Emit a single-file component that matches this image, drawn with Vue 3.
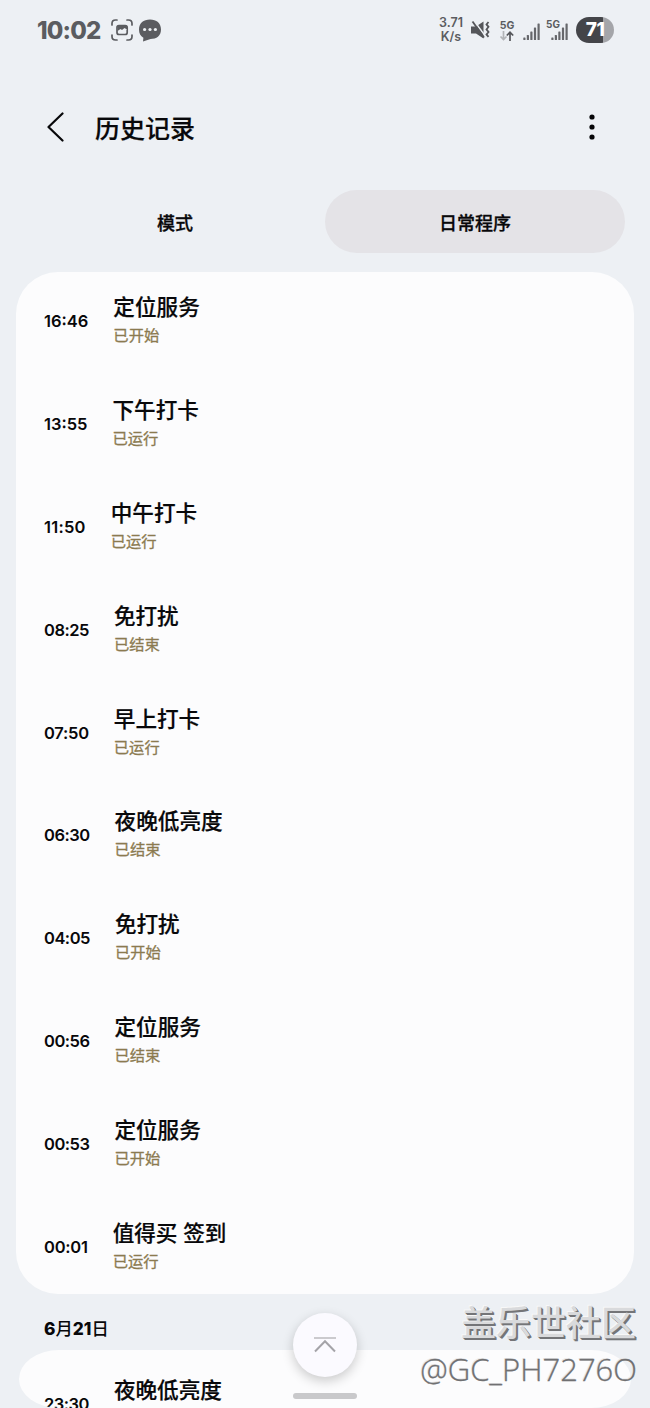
<template>
  <div class="screen">
    <header class="status-bar">
      <div class="status-left">
        <span class="clock">10:02</span>
        <svg class="capture-icon" viewBox="0 0 22 22" width="22" height="22">
          <path d="M1 6V4.500Q1 1 4.500 1H6M16 1h1.500Q21 1 21 4.500V6M21 16v1.500Q21 21 17.500 21H16M6 21H4.500Q1 21 1 17.500V16" fill="none" stroke="#5b5c60" stroke-width="1.700" stroke-linecap="round" />
          <rect x="6" y="6.500" width="10.200" height="9" rx="2" fill="none" stroke="#5b5c60" stroke-width="1.700" />
          <path d="M7 14.500v-2.500l2.500-1.500 1.500 1 2.500-2 2.200 1.500V7H7z" fill="#eef1f4" />
          <path d="M6.500 12l3-2 1.500 1 2.500-2 2.500 1.500V6.500h-9.500z" fill="#5b5c60" />
        </svg>
        <svg class="chat-icon" viewBox="0 0 24 23" width="24" height="23">
          <path d="M12 .5C18.500.5 23 4 23 10.500S18.500 20 12.500 20L5 22.500l.4-3.700C2.500 17 1 14.500 1 10.500 1 4 5.500.5 12 .5z" fill="#5b5c60" />
          <circle cx="6.600" cy="10.500" r="1.600" fill="#eef1f4" />
          <circle cx="12" cy="10.500" r="1.600" fill="#eef1f4" />
          <circle cx="17.400" cy="10.500" r="1.600" fill="#eef1f4" />
        </svg>
      </div>
      <div class="status-right">
        <div class="speed"><span>3.71</span><span>K/s</span></div>
        <svg class="mute-icon" viewBox="0 0 20 20" width="20" height="20">
          <path d="M0 6.500h5L12.500 1.500v17L5 13.500H0z" fill="#55565a" />
          <path d="M2.500 0 13.500 15" stroke="#eef1f4" stroke-width="1.500" />
          <path d="M1.500 1.500 13 17.500" stroke="#55565a" stroke-width="1.800" />
          <path d="M17.500 2l-2 2.400 2 2.400-2 2.600 2 2.600-2 2.400 2 2.400" fill="none" stroke="#55565a" stroke-width="1.800" />
        </svg>
        <div class="network">
          <span>5G</span>
          <svg viewBox="0 0 16 10" width="16" height="10" fill="none" stroke-width="1.700">
            <path d="M4.500 0v8.500M1.500 5.500l3 3 3-3" stroke="#b2b4b7" />
            <path d="M11 10V1.200M7.800 4.500l3.200-3.200 3.200 3.200" stroke="#55565a" />
          </svg>
        </div>
        <svg class="signal" viewBox="0 0 18 18" width="18" height="18" fill="#66676b">
          <rect v-for="bar in bars" :key="bar.x" :x="bar.x" :y="17 - bar.h" width="2.200" :height="bar.h" rx=".6" />
        </svg>
        <div class="signal-two">
          <span>5G</span>
          <svg class="signal" viewBox="0 0 18 18" width="18" height="18" fill="#66676b">
            <rect v-for="bar in bars" :key="bar.x" :x="bar.x" :y="17 - bar.h" width="2.200" :height="bar.h" rx=".6" />
          </svg>
        </div>
        <div class="battery">71</div>
      </div>
    </header>

    <div class="title-bar">
      <svg class="back" viewBox="0 0 18 30" width="18" height="30">
        <path d="M15.500 1.500 1.500 15l14 13.500" fill="none" stroke="#08080a" stroke-width="2.200" stroke-linecap="round" stroke-linejoin="round" />
      </svg>
      <h1>历史记录</h1>
      <svg class="more" viewBox="0 0 6 26" width="6" height="26" fill="#060608">
        <circle cx="3" cy="3" r="2.600" />
        <circle cx="3" cy="13" r="2.600" />
        <circle cx="3" cy="23" r="2.600" />
      </svg>
    </div>

    <nav class="tabs">
      <button
        v-for="tab in tabs"
        :key="tab"
        :class="{ active: activeTab === tab }"
        @click="activeTab = tab"
      >
        {{ tab }}
      </button>
    </nav>

    <section class="card">
      <div v-for="item in history" :key="item.time" class="row">
        <span class="time" :class="item.fit">{{ item.time }}</span>
        <div class="info">
          <span class="name">{{ item.name }}</span>
          <span class="state">{{ item.state }}</span>
        </div>
      </div>
    </section>

    <h2 class="date"><b>6</b>月<b>21</b>日</h2>

    <section class="card next-card">
      <div class="row">
        <span class="time tight">23:30</span>
        <div class="info">
          <span class="name">夜晚低亮度</span>
        </div>
      </div>
    </section>

    <button class="to-top">
      <svg viewBox="0 0 24 18" width="24" height="18" fill="none">
        <path d="M1 2h22" stroke="#c2c1c6" stroke-width="1.700" />
        <path d="M2 15.500 12 5.200l10 10.300" stroke="#a4a3a8" stroke-width="2" />
      </svg>
    </button>
    <div class="home-bar"></div>

    <div class="watermark">
      <span class="community">盖乐世社区</span>
      <span class="user">@GC_PH7276O</span>
    </div>
  </div>
</template>

<script setup>
import { ref } from 'vue';

const tabs = ['模式', '日常程序'];
const activeTab = ref('日常程序');

// fit evens out the times made of wide or narrow digits
const history = [
  { time: '16:46', name: '定位服务', state: '已开始' },
  { time: '13:55', name: '下午打卡', state: '已运行' },
  { time: '11:50', name: '中午打卡', state: '已运行', fit: 'loose' },
  { time: '08:25', name: '免打扰', state: '已结束', fit: 'tight' },
  { time: '07:50', name: '早上打卡', state: '已运行', fit: 'snug' },
  { time: '06:30', name: '夜晚低亮度', state: '已结束', fit: 'tight' },
  { time: '04:05', name: '免打扰', state: '已开始', fit: 'tight' },
  { time: '00:56', name: '定位服务', state: '已结束', fit: 'tight' },
  { time: '00:53', name: '定位服务', state: '已开始', fit: 'tight' },
  { time: '00:01', name: '值得买 签到', state: '已运行', fit: 'snug' }
];

const bars = [
  { x: 0.3, h: 2.5 },
  { x: 3.8, h: 5 },
  { x: 7.3, h: 8.5 },
  { x: 10.9, h: 12.5 },
  { x: 14.5, h: 16.5 }
];
</script>

<style>
body {
  margin: 0;
  background: #edf0f4;
}
</style>

<style scoped>
.screen {
  position: relative;
  display: flex;
  flex-direction: column;
  width: 650px;
  height: 1408px;
  overflow: hidden;
  background: #edf0f4;
  color: #08080a;
  font-family: Inter, "Noto Sans CJK SC", sans-serif;
}

button {
  padding: 0;
  border: none;
  background: none;
  font-family: inherit;
  color: inherit;
}

.status-bar {
  display: flex;
  justify-content: space-between;
  height: 60px;
  padding: 0 36px 0 37px;
  box-sizing: border-box;
  flex-shrink: 0;
  color: #5b5c60;
}

.status-left,
.status-right {
  display: flex;
  align-items: center;
}

.clock {
  font-size: 24px;
  font-weight: 800;
  letter-spacing: -0.8px;
}

.capture-icon {
  margin-left: 10px;
}

.chat-icon {
  margin-left: 5px;
}

.speed {
  display: flex;
  flex-direction: column;
  align-items: center;
  width: 26px;
  font-size: 12.5px;
  line-height: 14px;
  font-weight: 600;
}

.mute-icon {
  margin-left: 7px;
}

.network {
  display: flex;
  flex-direction: column;
  align-items: center;
  margin-left: 8px;
  font-size: 10.5px;
  line-height: 11px;
  font-weight: 700;
}

.signal {
  margin: 3px 0 0 8px;
}

.signal-two {
  position: relative;
  display: flex;
  margin-left: 2px;
}

.signal-two span {
  position: absolute;
  left: 3px;
  top: -1px;
  font-size: 10px;
  line-height: 11px;
  font-weight: 700;
}

.battery {
  width: 38px;
  height: 26px;
  margin-left: 7px;
  border-radius: 13px;
  background: linear-gradient(90deg, #444549 71%, #a4a5a9 71%);
  color: #fff;
  font-size: 19px;
  line-height: 26px;
  font-weight: 800;
  text-align: center;
  letter-spacing: -0.5px;
}

.title-bar {
  display: flex;
  align-items: center;
  height: 130px;
  padding: 0 55px 0 47px;
  flex-shrink: 0;
}

.back {
  margin-top: 4px;
}

.title-bar h1 {
  flex: 1;
  margin: 7px 0 0 30px;
  font-size: 25px;
  line-height: 36px;
  font-weight: 500;
  -webkit-text-stroke: 0.2px #08080a;
}

.more {
  margin-top: 4px;
}

.tabs {
  display: flex;
  height: 63px;
  padding: 0 25px;
  flex-shrink: 0;
}

.tabs button {
  flex: 1;
  border-radius: 32px;
  font-size: 18px;
  line-height: 26px;
  font-weight: 500;
  padding-top: 4px;
  -webkit-text-stroke: 0.3px #08080a;
}

.tabs button.active {
  background: #e4e3e7;
}

.card {
  display: flex;
  flex-direction: column;
  height: 1022px;
  margin: 19px 16px 0;
  padding: 19px 28px 0;
  box-sizing: border-box;
  flex-shrink: 0;
  border-radius: 42px;
  background: #fcfcfd;
}

.row {
  display: flex;
  align-items: flex-start;
  height: 102.9px;
  flex-shrink: 0;
}

.time {
  margin: 20px 25px 0 0;
  font-size: 16.5px;
  line-height: 20px;
  font-weight: 600;
}

.time.tight {
  letter-spacing: -0.5px;
}

.time.snug {
  letter-spacing: -0.25px;
}

.time.loose {
  letter-spacing: 0.25px;
}

.info {
  display: flex;
  flex-direction: column;
}

.name {
  font-size: 21.6px;
  line-height: 32px;
  font-weight: 500;
  -webkit-text-stroke: 0.2px #08080a;
}

.state {
  font-size: 15.3px;
  line-height: 25px;
  color: #8b7a50;
  -webkit-text-stroke: 0.3px #8b7a50;
}

.date {
  height: 56px;
  margin: 0 0 0 44px;
  padding-top: 15px;
  box-sizing: border-box;
  flex-shrink: 0;
  font-size: 17.3px;
  line-height: 40px;
  font-weight: 500;
}

.date b {
  font-weight: 800;
}

.next-card {
  height: 58px;
  margin: 0 19px;
  padding: 24px 25px 0;
  overflow: hidden;
  border-radius: 40px / 29px;
}

.to-top {
  position: absolute;
  left: 293px;
  top: 1313px;
  display: flex;
  align-items: center;
  justify-content: center;
  width: 64px;
  height: 64px;
  border-radius: 50%;
  background: #fbfaff;
  box-shadow: 0 4px 12px rgba(0, 0, 0, 0.2);
}

.home-bar {
  position: absolute;
  left: 293px;
  top: 1393px;
  width: 64px;
  height: 6px;
  border-radius: 3px;
  background: #c9c9cb;
}

.watermark {
  position: absolute;
  right: 13px;
  top: 1300px;
  display: flex;
  flex-direction: column;
  align-items: flex-end;
}

.community {
  margin-right: 1px;
  font-size: 35px;
  line-height: 46px;
  font-weight: 500;
  color: #d9dadc;
  text-shadow: 1px 1px 0 #747578, 2px 2px 0 #747578, -1px -1px 0 #f8f8f8;
}

.user {
  font-family: "Open Sans", "Noto Sans", sans-serif;
  font-size: 31px;
  line-height: 46px;
  font-weight: 300;
  color: #707072;
  -webkit-text-stroke: 0.3px #707072;
  text-shadow: -1px -1px 0 #e9e9ea;
}
</style>
